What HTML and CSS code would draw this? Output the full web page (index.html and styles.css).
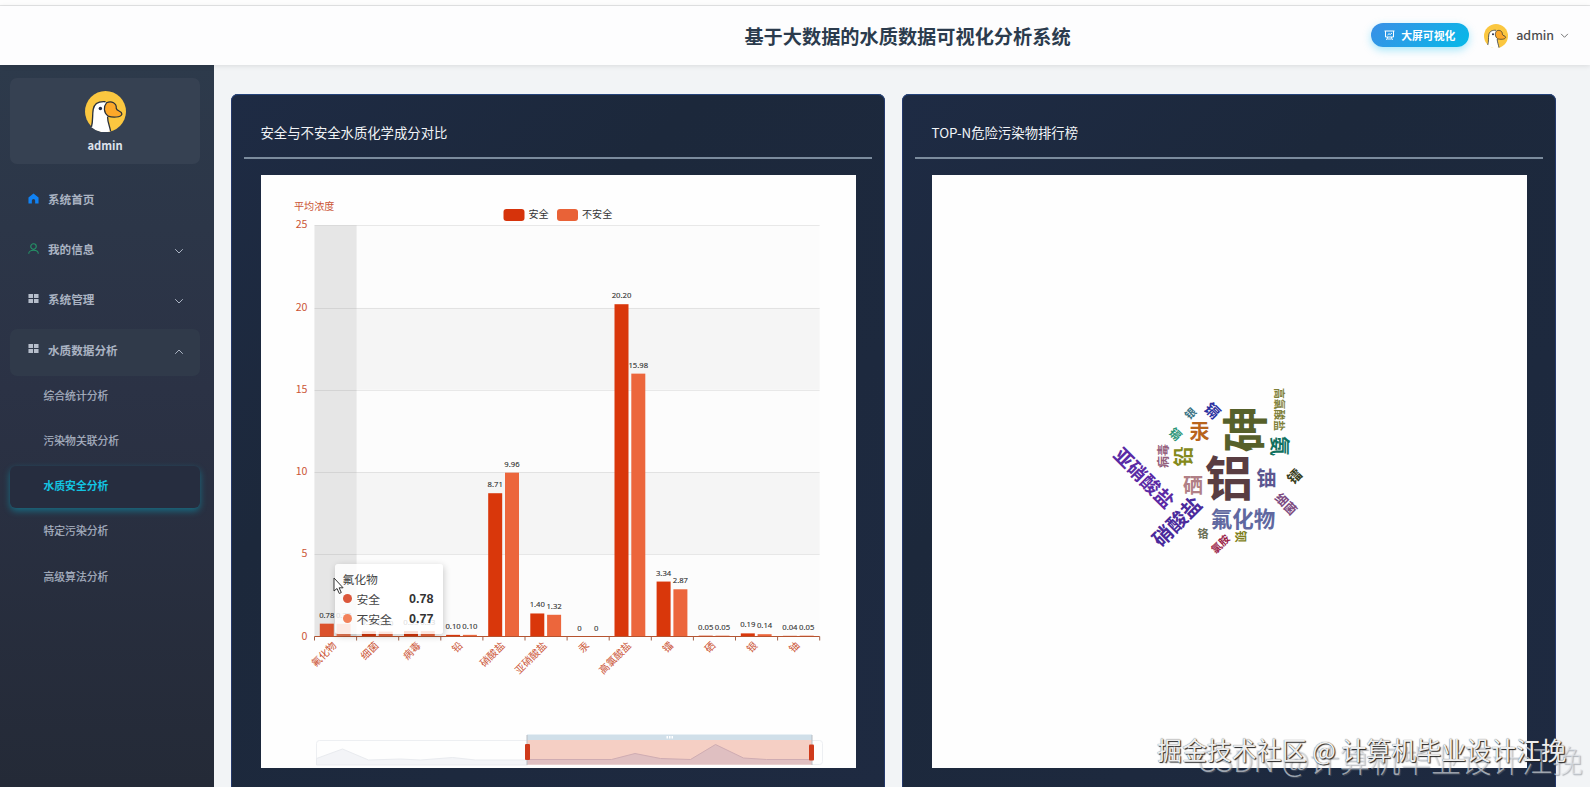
FILE: index.html
```html
<!DOCTYPE html>
<html lang="zh">
<head>
    <meta charset="UTF-8">
    <title>基于大数据的水质数据可视化分析系统</title>
    <link rel="stylesheet" href="styles.css">
</head>
<body>
<svg width="0" height="0" class="defs">
    <symbol id="goose" viewBox="0 0 40 40">
        <circle cx="20" cy="20" r="20" fill="#fbc740"/>
        <path d="M6 35C8 29 7 24 8 18C9 12 14 10 18 10.500C24 10 25 18 22 25C23 30 24 34 25 39.300A20 20 0 0 1 6 35Z" fill="#fff"/>
        <path d="M6.300 35C8 29 7 24 8 18C9 12 14 10 20 10.500M22 25C22 30 24 34 25 39.300" fill="none" stroke="#2b3138" stroke-width="1.300"/>
        <path d="M21 11.500C26 9 31 12 30.500 17C31 20 36 19 36 22.500C35 26 27 26 22.500 24.500C18 21 18 15 21 11.500Z" fill="#fda829" stroke="#2b3138" stroke-width="1.200"/>
        <circle cx="15" cy="17" r="1.700" fill="#222a44"/>
    </symbol>
    <symbol id="grid" viewBox="0 0 12 12">
        <path d="M.5 1h5v4.500h-5zM6.500 1h5v4.500h-5zM.5 6.500h5V11h-5zM6.500 6.500h5V11h-5z" fill="currentColor"/>
    </symbol>
    <symbol id="down" viewBox="0 0 10 10">
        <path d="M1.200 3.200L5 7l3.800-3.800" fill="none" stroke="currentColor"/>
    </symbol>
</svg>

<div class="topline"></div>
<div class="header">
    <h1>基于大数据的水质数据可视化分析系统</h1>
    <div class="tools">
        <a href="#" class="screen-btn">
            <svg viewBox="0 0 11 11"><path d="M.5 1h10M1.500 1v6h8V1M3.500 5l1.500-1.300 1.200.800L8 3M3.800 7L2.500 10M7.200 7l1.300 3M3.500 9h4" fill="none" stroke="#fff"/></svg>
            大屏可视化
        </a>
        <svg class="face"><use href="#goose"/></svg>
        <span class="name">admin</span>
        <svg class="caret"><use href="#down"/></svg>
    </div>
</div>

<div class="main">
    <div class="side">
        <div class="user">
            <svg><use href="#goose"/></svg>
            <p>admin</p>
        </div>
        <ul class="menu">
            <li><svg class="icon" viewBox="0 0 12 12"><path d="M6 .5L.5 5v6.500h3.700V8.300a1.800 1.800 0 0 1 3.600 0v3.200h3.700V5z" fill="#1082f4"/></svg>系统首页</li>
            <li><svg class="icon" viewBox="0 0 12 12"><path d="M6 .8a3 3 0 1 1 0 6a3 3 0 1 1 0-6zM.8 11.700c0-5 10.400-5 10.400 0" fill="none" stroke="#249467" stroke-width="1.200"/></svg>我的信息<svg class="arrow"><use href="#down"/></svg></li>
            <li><svg class="icon"><use href="#grid"/></svg>系统管理<svg class="arrow"><use href="#down"/></svg></li>
            <li class="open"><svg class="icon"><use href="#grid"/></svg>水质数据分析<svg class="arrow up"><use href="#down"/></svg></li>
        </ul>
        <ul class="sub">
            <li>综合统计分析</li>
            <li>污染物关联分析</li>
            <li class="active">水质安全分析</li>
            <li>特定污染分析</li>
            <li>高级算法分析</li>
        </ul>
    </div>

    <div class="content">
        <div class="panel">
            <h2>安全与不安全水质化学成分对比</h2>
            <div class="box">
                <svg id="chart" viewBox="0 0 594 593"></svg>
                <div class="tip">
                    <p>氟化物</p>
                    <p><i class="safe"></i>安全<b>0.78</b></p>
                    <p><i class="unsafe"></i>不安全<b>0.77</b></p>
                </div>
                <svg class="mouse" viewBox="0 0 12 18"><path d="M1 1v13l3-2.500 2.300 5 2-1-2.200-4.700h4z" fill="#fff" stroke="#333"/></svg>
            </div>
        </div>
        <div class="panel">
            <h2>TOP-N危险污染物排行榜</h2>
            <div class="box">
                <svg id="cloud" viewBox="0 0 594 593"></svg>
            </div>
        </div>
    </div>
</div>
<div class="mark back">CSDN @计算机毕业设计江挽</div>
<div class="mark front">掘金技术社区 @ 计算机毕业设计江挽</div>
<script src="charts.js"></script>
</body>
</html>
```
FILE: styles.css
```css
@charset "UTF-8";
body,h1,h2,p,ul,li{margin:0;padding:0}
body{
    height:787px;
    overflow:hidden;
    font:12px/1.5 "Noto Sans CJK SC", sans-serif;
    color:#333;
    background:#f2f4f6;
    position:relative;
}
ul{list-style:none}
a{text-decoration:none}
svg{display:block;flex:none}
.defs{position:absolute}

.topline{
    height:5px;
    background:#fdfdfd;
    border-bottom:1px solid #e4e5e6;
}
.header{
    height:59px;
    display:grid;
    grid-template-columns:1fr auto 1fr;
    align-items:center;
    padding:0 21px 0 226px;
    background:#fdfdfe;
    box-shadow:0 1px 5px rgba(0,0,0,.1);
    position:relative;
}
.header h1{
    grid-column:2;
    margin-left:20px;
    font-size:19.200px;
    line-height:28px;
    font-weight:700;
    color:#2b3b4d;
    padding-top:1px;
}
.tools{
    display:flex;
    align-items:center;
    justify-content:flex-end;
}
.screen-btn{
    display:flex;
    align-items:center;
    width:85px;
    height:24px;
    margin-top:-1px;
    padding-left:13px;
    border-radius:12px;
    color:#fff;
    font-size:10.800px;
    font-weight:700;
    background:linear-gradient(135deg,#3a8fe6,#06b9e8);
    box-shadow:0 3px 8px rgba(0,190,240,.35);
}
.screen-btn svg{
    width:11px;
    height:11px;
    margin-right:6px;
}
.face{
    width:24px;
    height:24px;
    margin:0 8px 0 15px;
}
.name{
    font-size:12.600px;
    font-weight:400;
    color:#444;
    -webkit-text-stroke:.2px #444;
}
.caret{
    width:9px;
    height:9px;
    margin-left:6px;
    color:#666;
}

.main{
    display:flex;
    height:722px;
}
.side{
    width:194px;
    padding:13px 10px 0;
    background:linear-gradient(180deg,#2d3a4b,#2b3245 45%,#242a37);
    color:#aab3c2;
}
.user{
    width:190px;
    height:86px;
    border-radius:7px;
    background:#364152;
    text-align:center;
}
.user svg{
    width:41px;
    height:41px;
    margin:0 auto;
    padding-top:13px;
}
.user p{
    font-size:11.200px;
    font-weight:700;
    line-height:18px;
    padding-top:4px;
    color:#dde3ec;
}
.menu{padding-top:11.500px}
.menu li{
    display:flex;
    align-items:center;
    width:172px;
    height:47px;
    margin-bottom:3.200px;
    padding-left:18px;
    font-size:11.600px;
    font-weight:700;
    line-height:20px;
    border-radius:7px;
}
.menu .open{
    height:42px;
    margin:6px 0 0;
    padding-bottom:5px;
    background:#303a4a;
}
.icon{
    width:11px;
    height:11px;
    margin:-2px 9.500px 0 -.5px;
    color:#b6becb;
}
.arrow{
    width:10px;
    height:10px;
    margin:3px 16px 0 auto;
}
.arrow.up{
    margin-top:4px;
    transform:rotate(180deg);
}
.sub li{
    width:156.500px;
    height:42px;
    margin-bottom:3.200px;
    padding-left:33.500px;
    border-radius:6px;
    font-size:10.800px;
    line-height:38px;
    -webkit-text-stroke:.2px currentColor;
}
.sub .active{
    color:#12c5e2;
    font-weight:700;
    background:#262d3f;
    box-shadow:0 3px 7px rgba(0,190,220,.42);
    -webkit-text-stroke:0;
}

.content{
    flex:1;
    display:flex;
    gap:16.500px;
    padding:29px 34px 0 16.500px;
}
.panel{
    flex:1;
    padding:0 13px;
    border-radius:7px 7px 0 0;
    background:linear-gradient(135deg,#1e2b44,#1c283b 35%,#1e2a41);
    box-shadow:inset 0 1px #25437a, inset 1px 0 #24386a, inset -1px 0 #24386a;
}
.panel h2{
    height:61px;
    padding:2px 0 0 17px;
    border-bottom:2px solid #7b8b9d;
    font-size:13.350px;
    font-weight:400;
    line-height:74px;
    color:#f1f4f7;
}
.box{
    position:relative;
    height:593px;
    margin:16px 16.500px 0 17px;
    background:#fefefe;
}
#chart,#cloud{
    width:100%;
    height:593px;
}
#chart .num{
    font:7.700px "Noto Sans", sans-serif;
    text-anchor:middle;
    fill:#333;
    stroke:#333;
    stroke-width:.1px;
}
#chart .axis{
    font-size:10.100px;
    fill:#cb5435;
}
#chart .axis.end{text-anchor:end}
#chart .value{font-size:10.600px}
#chart .legend{
    font-size:10.100px;
    fill:#333;
}
#cloud text{
    font-weight:700;
    text-anchor:middle;
}
.tip{
    position:absolute;
    left:74px;
    top:389px;
    width:91px;
    height:65px;
    padding:4.500px 9.500px 0 8px;
    border-radius:3px;
    background:rgba(255,255,255,.84);
    box-shadow:1px 2px 7px rgba(0,0,0,.2);
    font-size:11.800px;
    color:#444;
}
.tip p{
    display:flex;
    align-items:center;
    height:20px;
}
.tip i{
    width:9px;
    height:9px;
    margin-right:5px;
    border-radius:50%;
    background:#db573b;
}
.tip .unsafe{background:#f2825b}
.tip b{
    margin-left:auto;
    font:bold 12.600px "Liberation Sans", sans-serif;
    color:#333;
}
.mouse{
    position:absolute;
    left:72px;
    top:401.500px;
    width:12px;
    height:18px;
}

.mark{
    position:absolute;
    white-space:nowrap;
}
.mark.front{
    left:1157px;
    top:731px;
    font-size:24.950px;
    color:#eee;
    text-shadow:1px 1px 1px #222,0 0 1px #555;
}
.mark.back{
    left:1197px;
    top:737px;
    font-size:30.400px;
    font-weight:300;
    color:rgba(222,226,231,.65);
    text-shadow:1px 1px 1px rgba(110,115,125,.5);
}
```
FILE: charts.js
```js
var chart = document.getElementById("chart");
var cloud = document.getElementById("cloud");

//坐标系：左边界、零线、每单位高度、类目宽度
var left = 53;
var zero = 461.5;
var unit = 16.45;
var step = 42.1;

// 名称, 安全, 不安全
var rows = [
    ["氟化物", 0.78, 0.77],
    ["细菌", 0.32, 0.3],
    ["病毒", 0.33, 0.33],
    ["铅", 0.1, 0.1],
    ["硝酸盐", 8.71, 9.96],
    ["亚硝酸盐", 1.4, 1.32],
    ["汞", 0, 0],
    ["高氯酸盐", 20.2, 15.98],
    ["镭", 3.34, 2.87],
    ["硒", 0.05, 0.05],
    ["银", 0.19, 0.14],
    ["铀", 0.04, 0.05]
];

function rect(x, y, w, h, fill, extra) {
    return '<rect x="' + x + '" y="' + y + '" width="' + w + '" height="' + h + '" fill="' + fill + '" ' + (extra || "") + '/>';
}
function line(x1, y1, x2, y2, stroke) {
    return '<path d="M' + x1 + ' ' + y1 + 'L' + x2 + ' ' + y2 + '" stroke="' + stroke + '"/>';
}
function text(x, y, cls, str, extra) {
    return '<text x="' + x + '" y="' + y + '" class="' + cls + '" ' + (extra || "") + '>' + str + '</text>';
}

drawChart();
drawCloud();

function drawChart() {
    var s = "";
    var width = step * rows.length;
    //分隔区域
    for (var v = 0; v < 25; v += 5) {
        s += rect(left, zero - (v + 5) * unit, width, 5 * unit, v % 10 ? "#f5f5f5" : "#fcfcfc");
    }
    s += rect(left, zero - 25 * unit, step, 25 * unit, "#e6e6e6");
    for (v = 0; v <= 25; v += 5) {
        var y = Math.round(zero - v * unit) + 0.5;
        if (v) {
            s += line(left, y, left + width, y, "rgba(60,60,60,.1)");
        }
        s += text(46, y + 2.5, "axis value end", v);
    }
    s += text(32.5, 35, "axis", "平均浓度");

    //图例
    s += rect(242, 34, 21, 12, "#d6330b", 'rx="3"') + text(267, 43, "legend", "安全");
    s += rect(295.5, 34, 21, 12, "#e96237", 'rx="3"') + text(320.5, 43, "legend", "不安全");

    //柱子
    rows.forEach(function (r, i) {
        var x = left + i * step;
        for (var k = 0; k < 2; k++) {
            var h = r[k + 1] * unit;
            var bx = x + 5.3 + k * 16.8;
            s += rect(bx, zero - h, 14, h, k ? "#ec663c" : "#d9370b", i ? "" : 'opacity=".85"');
            s += text(bx + 7, zero - h - 6, "num", r[k + 1] ? r[k + 1].toFixed(2) : 0);
        }
        s += text(0, 0, "axis end", r[0], 'transform="translate(' + (x + step / 2 - 1) + ' ' + (zero + 7) + ') rotate(-45)" dy=".37em"');
    });
    s += line(left, zero, left + width, zero, "#b6532f");
    for (var i = 0; i <= rows.length; i++) {
        s += line(left + i * step, zero, left + i * step, zero + 4, "#a0624a");
    }

    //缩放条
    s += rect(55, 565.5, 506, 24, "none", 'rx="3" stroke="#edeff2"');
    s += '<path d="M55 583.500L81 574L107 585L139 584L159 585L191 582.500L214 585H266V590H55Z" fill="#f3f4f7" stroke="#e9ebef"/>';
    s += rect(265.5, 559.5, 285, 5.500, "#d0dfe9");
    s += rect(265.5, 565, 285, 24.500, "#f5cfc4");
    s += '<path d="M265.500 584.500H350L373.500 578.500L399 583.500L429 584.500L454 569.500L482 583L505 584.500H550.500V589.500H265.500Z" fill="#dfbfc1"/>';
    s += '<path d="M265.500 584.500H350L373.500 578.500L399 583.500L429 584.500L454 569.500L482 583L505 584.500H550.500" fill="none" stroke="#cfacb2"/>';
    s += rect(405, 561, 1.5, 2.5, "#fff") + rect(407.5, 561, 1.5, 2.5, "#fff") + rect(410, 561, 1.5, 2.5, "#fff");
    s += line(265.5, 560, 265.5, 590, "#b8bcc2") + line(550.5, 560, 550.5, 590, "#b8bcc2");
    s += rect(263.5, 569, 5, 16, "#cf3a1b", 'rx="1"') + rect(547.5, 569.500, 5, 16, "#cf3a1b", 'rx="1"');
    chart.innerHTML = s;
}

function drawCloud() {
    // 文字, x, y, 字号, 旋转, 颜色
    var words = [
        ["铝", 296.5, 303.5, 48, 0, "#593d42"],
        ["砷", 312, 254.500, 46, -90, "#56602a"],
        ["氟化物", 310.5, 343.700, 21.500, 0, "#6068a0"],
        ["硝酸盐", 244.5, 346.500, 20, -45, "#4a2a9c"],
        ["亚硝酸盐", 211.5, 303, 19, 45, "#5a2aa5"],
        ["硒", 260.5, 310.500, 20, 0, "#b07f86"],
        ["铀", 334, 303.500, 20, 0, "#5b5690"],
        ["汞", 267, 256.500, 20, 0, "#b8641c"],
        ["铅", 251.5, 281.500, 20, -90, "#848a1a"],
        ["氨", 347, 271, 20, 90, "#10705f"],
        ["高氯酸盐", 346, 234.500, 10.800, 90, "#7f8038"],
        ["镉", 280, 235.500, 15, 45, "#2a30a0"],
        ["银", 258, 238.500, 11, -45, "#397284"],
        ["镉", 243, 259, 12, 45, "#2b9577"],
        ["病毒", 231, 281, 12, -90, "#94607c"],
        ["镭", 362, 301.500, 14, -45, "#39401d"],
        ["细菌", 353.5, 329, 12.500, 45, "#7c4a80"],
        ["铬", 270.5, 359, 10.800, 0, "#6b7057"],
        ["氯胺", 288, 369, 10.500, -45, "#9a2348"],
        ["钡", 308, 361.500, 12, 90, "#808020"]
    ];
    cloud.innerHTML = words.map(function (w) {
        return '<text transform="translate(' + w[1] + ' ' + w[2] + ') rotate(' + w[4] + ')" dy=".37em" font-size="' + w[3] + '" fill="' + w[5] + '">' + w[0] + '</text>';
    }).join("");
}
```
